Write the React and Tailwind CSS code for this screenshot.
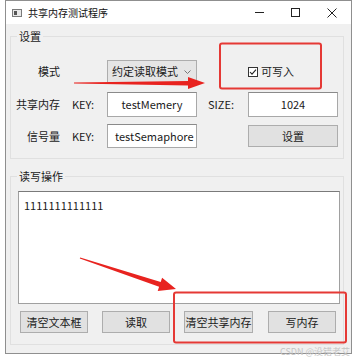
import React from 'react';

const LABEL = 'text-[11px] leading-none text-[#1a1a1a]';

const Field = ({ children, center = true }) => (
  <div
    className={`w-[90px] h-full bg-white border border-[#a8a8a8] border-t-[#8a8a8a] flex items-center overflow-hidden whitespace-nowrap text-[11px] text-[#1a1a1a] ${
      center ? 'justify-center' : 'pl-[7px]'
    }`}
  >
    {children}
  </div>
);

const Button = ({ children, className = '' }) => (
  <div
    className={`h-[22px] bg-[#e1e1e1] border border-[#adadad] flex items-center justify-center text-[11px] text-[#1a1a1a] ${className}`}
  >
    {children}
  </div>
);

const App = () => {
  return (
    <div className="w-[358px] h-[360px] bg-white relative overflow-hidden font-['Noto_Sans_CJK_SC','Noto_Sans',sans-serif]">
      {/* ===== WINDOW ===== */}
      <div className="ml-[5px] w-[347px] h-[354px] border border-[#8f8f8f] bg-[#f0f0f0] flex flex-col">
        {/* Title bar */}
        <div className="h-[23px] bg-white flex items-center shrink-0">
          <svg width="10" height="8" viewBox="0 0 10 8" className="ml-[6px]">
            <rect x="0.5" y="0.5" width="9" height="7" fill="#e8e8e8" stroke="#7a7a7a" />
            <rect x="2" y="2" width="3" height="4" fill="#555" />
          </svg>
          <span className="ml-[6px] text-[10px] text-[#111]">共享内存测试程序</span>
          <div className="ml-auto flex items-center h-full">
            <div className="w-[36px] h-full flex items-center justify-center">
              <div className="w-[9px] h-px bg-[#222]" />
            </div>
            <div className="w-[36px] h-full flex items-center justify-center">
              <div className="w-[9px] h-[9px] border border-[#222]" />
            </div>
            <div className="w-[38px] h-full flex items-center justify-center">
              <svg width="10" height="10" viewBox="0 0 10 10">
                <path d="M0.5 0.5 L9.5 9.5 M9.5 0.5 L0.5 9.5" stroke="#222" strokeWidth="1" />
              </svg>
            </div>
          </div>
        </div>

        {/* ===== 设置 group ===== */}
        <fieldset className="ml-[4px] mr-[7px] mt-[4px] border border-[#e0e0e0] px-0 pb-[10px] pt-0 min-w-0">
          <legend className="ml-[6px] px-[2px] text-[11px] leading-[16px] text-[#1a1a1a]">设置</legend>

          {/* Row 1 */}
          <div className="mt-[16px] h-[23px] flex items-center">
            <div className={`w-[49px] text-right ${LABEL}`}>模式</div>
            <div className="ml-[47px] w-[90px] h-full bg-[#e5e5e5] border border-[#adadad] flex items-center pl-[4px] pr-[5px] text-[11px] text-[#1a1a1a]">
              <span>约定读取模式</span>
              <svg width="7" height="4" viewBox="0 0 7 4" className="ml-auto">
                <path d="M0.5 0.5 L3.5 3.5 L6.5 0.5" fill="none" stroke="#777" />
              </svg>
            </div>
            <div className="ml-[51px] flex items-center gap-[3px]">
              <svg width="10" height="10" viewBox="0 0 10 10">
                <rect x="0.5" y="0.5" width="9" height="9" fill="#fff" stroke="#333" />
                <path d="M2 5 L4 7.2 L8 2.6" fill="none" stroke="#222" strokeWidth="1.1" />
              </svg>
              <span className={LABEL}>可写入</span>
            </div>
          </div>

          {/* Row 2 */}
          <div className="mt-[9px] h-[25px] flex items-center">
            <div className={`w-[49px] text-right ${LABEL}`}>共享内存</div>
            <div className={`ml-[12px] w-[35px] ${LABEL}`}>KEY:</div>
            <Field>testMemery</Field>
            <div className={`w-[51px] pl-[11px] ${LABEL}`}>SIZE:</div>
            <Field>1024</Field>
          </div>

          {/* Row 3 */}
          <div className="mt-[7px] h-[24px] flex items-center">
            <div className={`w-[49px] text-right ${LABEL}`}>信号量</div>
            <div className={`ml-[12px] w-[35px] ${LABEL}`}>KEY:</div>
            <Field center={false}>testSemaphore</Field>
            <Button className="ml-[51px] w-[90px]">设置</Button>
          </div>
        </fieldset>

        {/* ===== 读写操作 group ===== */}
        <fieldset className="ml-[4px] mr-[7px] mt-[9px] border border-[#e0e0e0] px-0 pb-[11px] pt-0 min-w-0">
          <legend className="ml-[6px] px-[2px] text-[11px] leading-[16px] text-[#1a1a1a]">读写操作</legend>

          <div className="ml-[7px] mt-[7px] w-[322px] h-[113px] bg-white border border-[#a0a0a0] border-t-[#7a7a7a] px-[5px] pt-[6px] text-[11px] leading-[14px] text-[#1a1a1a]">
            1111111111111
          </div>

          <div className="mt-[7px] flex">
            <Button className="ml-[9px] w-[68px]">清空文本框</Button>
            <Button className="ml-[14px] w-[68px]">读取</Button>
            <Button className="ml-[14px] w-[69px]">清空共享内存</Button>
            <Button className="ml-[15px] w-[68px]">写内存</Button>
          </div>
        </fieldset>
      </div>

      {/* ===== ANNOTATIONS ===== */}
      <svg width="358" height="360" viewBox="0 0 358 360" className="absolute inset-0 pointer-events-none">
        <rect x="220" y="43.5" width="101" height="45" rx="2" fill="none" stroke="#e53935" strokeWidth="2" />
        <rect x="174" y="292.5" width="172" height="50" rx="2" fill="none" stroke="#e53935" strokeWidth="2" />
        <polygon points="74,82.6 188,81 188,77 205,83 188,89 188,85.4 74,83.4" fill="#e8231f" />
        <polygon points="80.2,257.5 160.7,282 162.1,277.7 176,289 157.7,291 159.1,286.8 79.8,258.5" fill="#e8231f" />
      </svg>

      <div className="absolute right-[8px] bottom-[4px] text-[9px] leading-none text-[#c4c4c4]">CSDN @没错老艾</div>
    </div>
  );
};

export default App;
